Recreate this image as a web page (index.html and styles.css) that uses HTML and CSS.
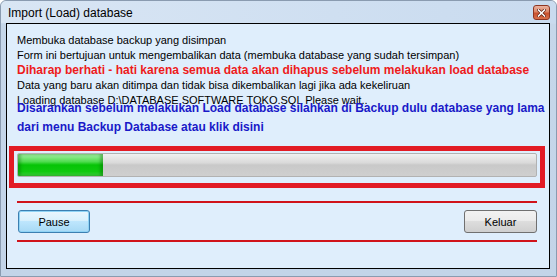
FILE: index.html
```html
<!DOCTYPE html>
<html>
<head>
<meta charset="utf-8">
<title>Import (Load) database</title>
<link rel="stylesheet" href="styles.css">
</head>
<body>
<div class="window">
  <div class="titlebar">
    <span class="title">Import (Load) database</span>
    <span class="close">
      <svg width="9" height="8" viewBox="0 0 9 8">
        <path d="M1.5 1 L7.5 7 M7.5 1 L1.5 7" stroke="#5a1a0c" stroke-width="3" stroke-linecap="square"/>
        <path d="M1.5 1 L7.5 7 M7.5 1 L1.5 7" stroke="#ffffff" stroke-width="1.6" stroke-linecap="square"/>
      </svg>
    </span>
  </div>
  <div class="client">
    <div class="info">
      <div class="line">Membuka database backup yang disimpan</div>
      <div class="line">Form ini bertujuan untuk mengembalikan data (membuka database yang sudah tersimpan)</div>
      <div class="line warn">Diharap berhati - hati karena semua data akan dihapus sebelum melakukan load database</div>
      <div class="line">Data yang baru akan ditimpa dan tidak bisa dikembalikan lagi jika ada kekeliruan</div>
      <div class="line">Loading database D:\DATABASE SOFTWARE TOKO.SQL Please wait..</div>
    </div>
    <div class="hint">Disarankan sebelum melakukan Load database silahkan di Backup dulu database yang lama<br>dari menu Backup Database atau klik disini</div>
    <div class="progress_box">
      <div class="progress"><div class="progress_fill" style="width:85px"></div></div>
    </div>
    <div class="rule"></div>
    <div class="buttons">
      <button class="btn btn_default">Pause</button>
      <button class="btn">Keluar</button>
    </div>
    <div class="rule"></div>
  </div>
</div>
</body>
</html>
```

FILE: styles.css
```css
body {
    margin: 0;
    background: #ffffff;
}
.window {
    width: 557px;
    height: 277px;
    box-sizing: border-box;
    display: flex;
    flex-direction: column;
    padding: 0 6px 7px 5px;
    border: solid 1px #8a9bb0;
    border-radius: 6px 6px 0 0;
    background: linear-gradient(to bottom, #dce8f5 0px, #cddcee 22px, #c6d7ea 23px, #c3d4e8 100%);
    font-family: "Liberation Sans", Arial, sans-serif;
}
.titlebar {
    height: 22px;
    display: flex;
    align-items: center;
    justify-content: space-between;
    margin-left: -5px;
    margin-right: -6px;
    padding: 0 6px 0 7px;
    background: linear-gradient(to right, #d9e6f4 0%, #cfdff1 60%, #c9dbef 100%);
    border-radius: 6px 6px 0 0;
}
.title {
    font-size: 12px;
    color: #000000;
    padding-top: 1px;
}
.close {
    width: 15px;
    height: 13px;
    display: flex;
    align-items: center;
    justify-content: center;
    border: solid 1px #8e3623;
    border-radius: 3px;
    background: linear-gradient(to bottom, #eab3a2 0%, #dc8566 45%, #c9512f 55%, #d8704b 100%);
    margin-top: 1px;
}
.client {
    flex: 1;
    border: solid 1px #000000;
    background-color: #dfeefc;
    padding: 9px 0 0 2px;
}
.info {
    margin-left: 8px;
}
.line {
    font-size: 11px;
    line-height: 15px;
    color: #000000;
    white-space: nowrap;
}
.warn {
    font-size: 12px;
    font-weight: bold;
    color: #ee1b1b;
}
.hint {
    margin-left: 8px;
    margin-top: -9px;
    font-size: 12px;
    font-weight: bold;
    line-height: 19px;
    color: #1919c8;
    white-space: nowrap;
}
.progress_box {
    margin-top: 9px;
    margin-right: 4px;
    height: 42px;
    box-sizing: border-box;
    border: solid 5px #e21b24;
    padding: 2px 3px 0 3px;
}
.progress {
    height: 22px;
    border: solid 1px #b2b2b2;
    border-radius: 2px;
    background: linear-gradient(to bottom, #f0f0f0 0%, #dadada 40%, #c9c9c9 50%, #cfcfcf 100%);
    overflow: hidden;
}
.progress_fill {
    height: 100%;
    background: linear-gradient(to bottom, #a8f0a8 0%, #4fdc4f 35%, #06c406 50%, #10c910 80%, #3fd23f 100%);
    box-shadow: inset -3px 0 3px rgba(0, 90, 0, 0.35), inset 3px 0 3px rgba(0, 90, 0, 0.3);
}
.rule {
    margin: 13px 12px 0 8px;
    height: 2px;
    background-color: #d0131a;
}
.buttons {
    display: flex;
    justify-content: space-between;
    margin: 7px 12px 0 9px;
}
.buttons + .rule {
    margin-top: 7px;
}
.btn {
    width: 73px;
    height: 23px;
    padding: 0;
    font-family: "Liberation Sans", Arial, sans-serif;
    font-size: 11px;
    color: #000000;
    border: solid 1px #707070;
    border-radius: 3px;
    background: linear-gradient(to bottom, #f2f2f2 0%, #ebebeb 45%, #dddddd 50%, #cfcfcf 100%);
}
.btn_default {
    width: 72px;
    border-color: #3c7fb1;
    background: linear-gradient(to bottom, #eaf6fd 0%, #d9f0fc 45%, #bee6fd 50%, #a7d9f5 100%);
    box-shadow: inset 0 0 0 1px #8fd3f5;
}
```
